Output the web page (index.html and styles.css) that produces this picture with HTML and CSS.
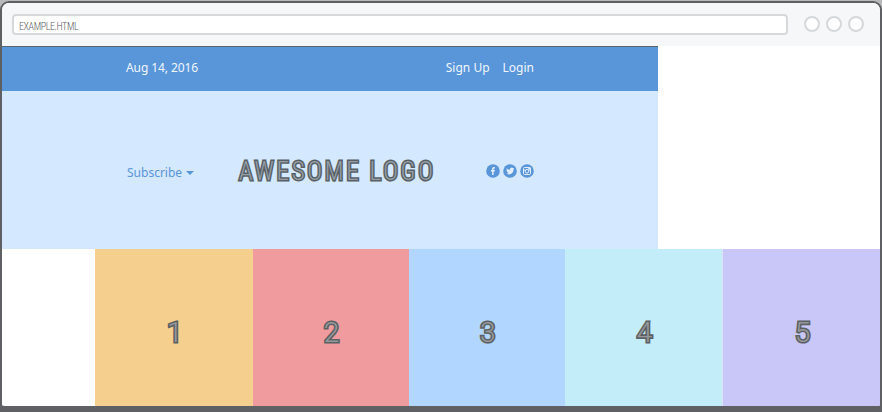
FILE: index.html
```html
<!DOCTYPE html>
<html lang="en">
<head>
<meta charset="utf-8">
<title>Awesome Logo</title>
<link rel="stylesheet" href="styles.css">
</head>
<body>
<div class="window">
  <div class="toolbar">
    <div class="address"><span class="url">EXAMPLE.HTML</span></div>
    <div class="controls"><i class="control"></i><i class="control"></i><i class="control"></i></div>
  </div>
  <div class="page">
    <nav class="menu">
      <span class="date">Aug 14, 2016</span>
      <div class="links"><span class="signup">Sign Up</span><span class="login">Login</span></div>
    </nav>
    <header class="header">
      <div class="subscribe"><span class="subscribe-text">Subscribe</span><i class="caret"></i></div>
      <h1 class="logo">AWESOME LOGO</h1>
      <div class="social">
        <svg width="14" height="14" viewBox="0 0 14 14"><circle cx="7" cy="7" r="6.8" fill="#5995d9"/><path d="M6.1 11V7.5H5V6h1.1V5c0-1.3.7-2 1.8-2h1v1.5h-.7c-.4 0-.6.2-.6.6V6h1.3l-.2 1.5H7.6V11z" fill="#e3efff"/></svg>
        <svg width="14" height="14" viewBox="0 0 14 14"><circle cx="7" cy="7" r="6.8" fill="#5995d9"/><path d="M3.3 3.9c1 1.2 2.2 1.8 3.7 1.9-.2-1.3.7-2.2 1.8-2.2.5 0 1 .2 1.3.6l1.1-.4-.7 1 .9-.2-.9 1c0 2.700-1.900 4.800-4.500 4.800-1 0-1.900-.3-2.700-.8.900.1 1.700-.2 2.300-.6-.7 0-1.300-.5-1.500-1.200h.7c-.8-.2-1.300-.9-1.300-1.700l.7.2c-.7-.5-1-1.500-.5-2.400z" fill="#e3efff"/></svg>
        <svg width="14" height="14" viewBox="0 0 14 14"><circle cx="7" cy="7" r="6.8" fill="#5995d9"/><path d="M3.500 4.500a1 1 0 0 1 1-1h5a1 1 0 0 1 1 1v5a1 1 0 0 1-1 1h-5a1 1 0 0 1-1-1zM3.600 6h1.500M8.900 6h1.500" fill="none" stroke="#e3efff"/><circle cx="7" cy="7.200" r="1.800" fill="none" stroke="#e3efff"/><path d="M8.200 3.500h2.300v2H8.200z" fill="#e3efff"/></svg>
      </div>
    </header>
  </div>
  <main class="photos">
    <section class="photo orange"><span class="number">1</span></section>
    <section class="photo red"><span class="number">2</span></section>
    <section class="photo blue"><span class="number">3</span></section>
    <section class="photo cyan"><span class="number">4</span></section>
    <section class="photo purple"><span class="number">5</span></section>
  </main>
</div>
</body>
</html>
```
FILE: styles.css
```css
* { box-sizing: border-box; }
body {
  margin: 0;
  height: 412px;
  padding-top: 1px;
  overflow: hidden;
  background: linear-gradient(#b7b9ba 0 12px, #5f6064 12px);
  font-family: "Noto Sans", sans-serif;
}
.window {
  height: 411px;
  border: 2px solid #5f6064;
  border-bottom-width: 6px;
  border-radius: 9px 9px 7px 7px;
  background: #fff;
  overflow: hidden;
}
.toolbar {
  display: flex;
  height: 43px;
  padding: 11px 15px 0 10px;
  background: #f6f7f9;
}
.address {
  display: flex;
  align-items: center;
  width: 776px;
  height: 21px;
  padding: 5px 0 0 5px;
  border: 2px solid #d6d8da;
  border-radius: 4px;
  background: #fff;
}
.url {
  color: #606264;
  font: 300 10px/12px Roboto, sans-serif;
  font-stretch: 80%;
  letter-spacing: -.4px;
}
.controls { display: flex; gap: 6px; margin: 2px 0 0 16px; }
.control {
  width: 16px;
  height: 16px;
  border: 2px solid #d6d8da;
  border-radius: 50%;
  background: #fff;
}
.page { width: 656px; height: 203px; background: #d4e8ff; }
.menu {
  display: flex;
  justify-content: space-between;
  height: 45px;
  padding: 12px 124px 0 124px;
  border-top: 1px solid #59656f;
  background: #5995d9;
  color: #f0f7ff;
  font-size: 12px;
  line-height: 17px;
}
.date { letter-spacing: -.08px; }
.links { display: flex; gap: 13px; }
.header {
  display: flex;
  align-items: center;
  height: 158px;
  padding: 2px 124px 0 125px;
}
.subscribe {
  display: flex;
  align-items: center;
  gap: 4px;
  width: 112px;
  padding-top: 2px;
  color: #5995d9;
  font-size: 12px;
  line-height: 17px;
}
.caret {
  margin-top: 2px;
  border: 4px solid transparent;
  border-top-color: #5995d9;
  border-bottom: 0;
}
.logo {
  width: 247px;
  margin: 0;
  padding-top: 2px;
  color: #939ea7;
  font: 300 25px/32px Roboto, sans-serif;
  font-stretch: 87%;
  letter-spacing: 2.7px;
  white-space: nowrap;
  -webkit-text-stroke: 3px #596065;
  paint-order: stroke fill;
}
.social { display: flex; gap: 3px; }
.photos {
  display: grid;
  grid-template-columns: 157.500px 156px 156.500px 157px 158px;
  height: 157px;
  padding-left: 93px;
}
.photo {
  display: flex;
  align-items: center;
  justify-content: center;
  padding-top: 11px;
}
.orange { background: #f4cf8e; }
.red { background: #f09c9e; }
.blue { background: #b1d6ff; }
.cyan { background: #c4edfa; }
.purple { border-left: 1px solid #dce2fb; background: #c8c7f8; }
.number {
  margin-left: 2px;
  color: #96989b;
  font: 300 28px/36px Roboto, sans-serif;
  font-stretch: 90%;
  -webkit-text-stroke: 3.2px #5b6064;
  paint-order: stroke fill;
}
```
